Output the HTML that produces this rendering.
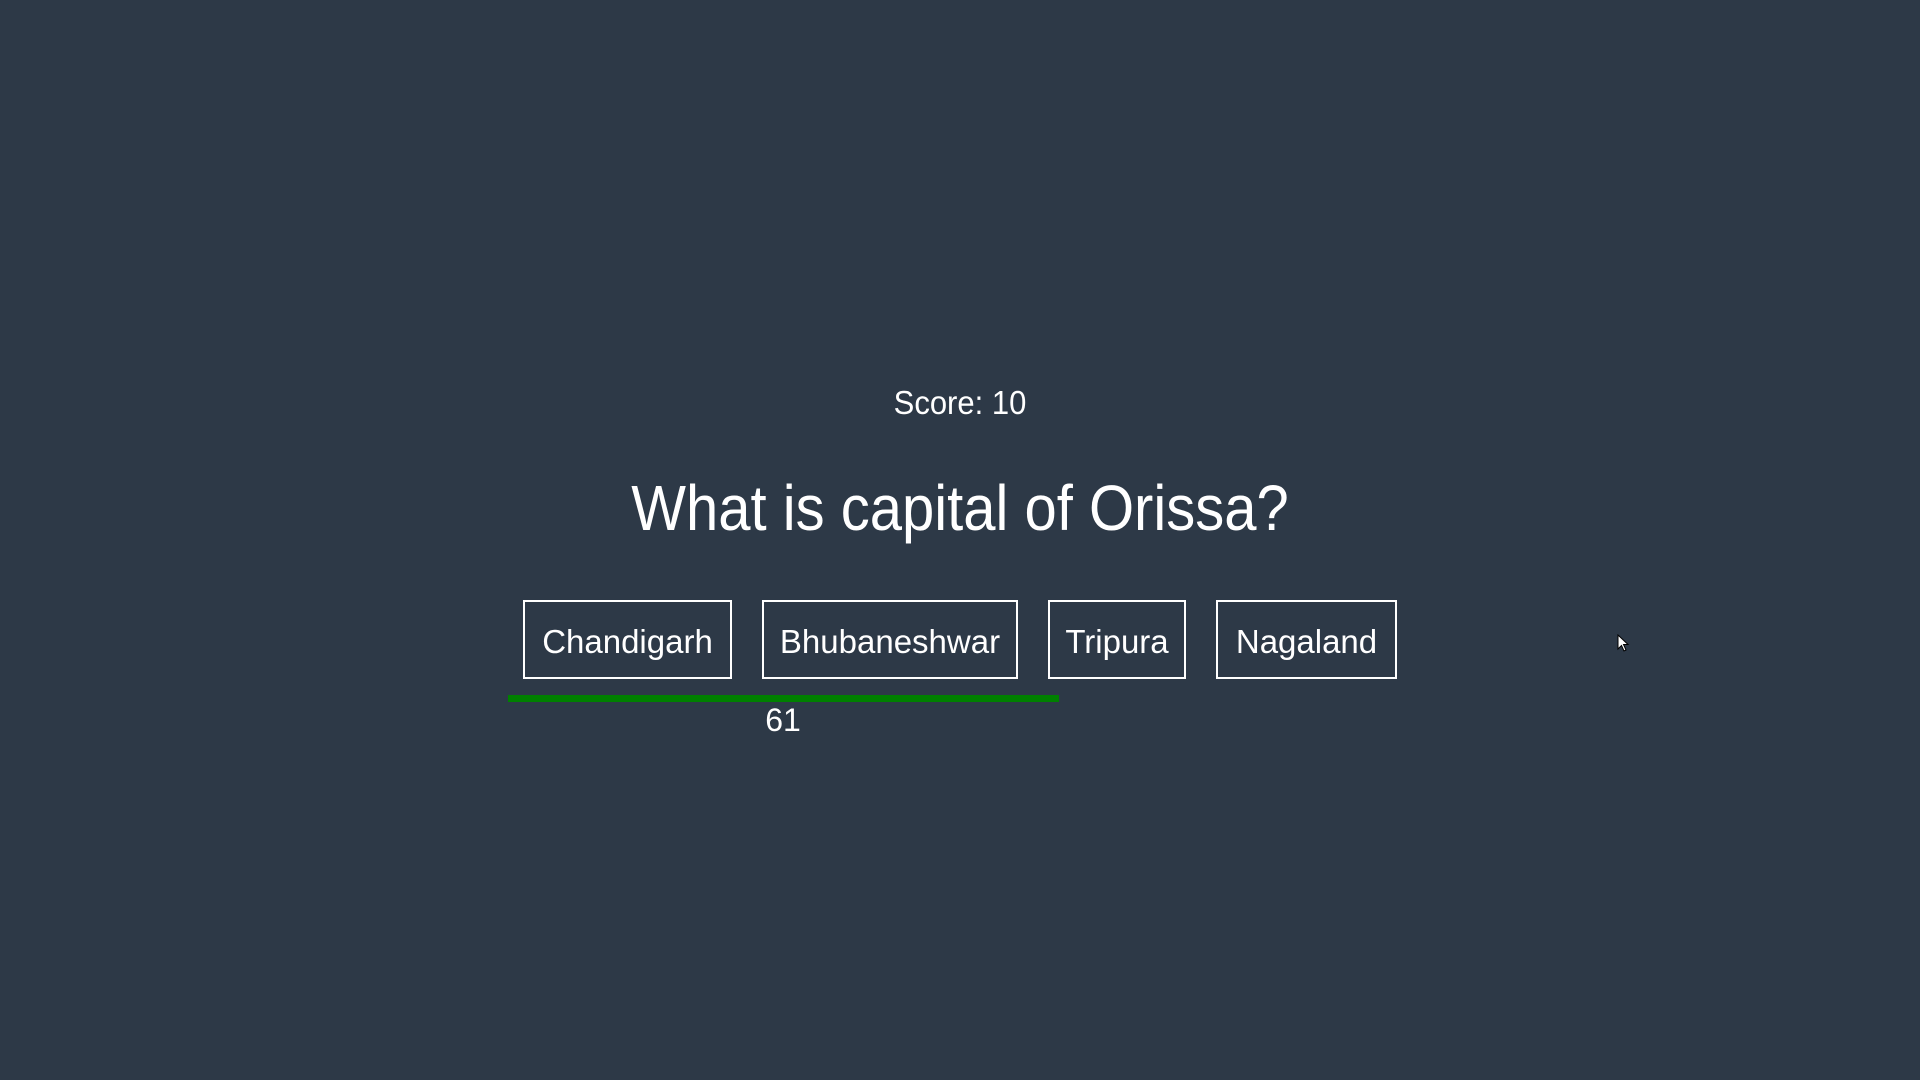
<!DOCTYPE html>
<html><head><meta charset="utf-8"><style>
html,body{margin:0;padding:0;width:1920px;height:1080px;overflow:hidden;background:#2d3947;font-family:"Liberation Sans",Arial,sans-serif;color:#fff}
.a{position:absolute;white-space:nowrap}
.c{text-align:center}
.btn{position:absolute;border:2px solid #fff;box-sizing:border-box;top:600px;height:79px;font-size:33px;line-height:79px;text-align:center}
</style></head><body>
<div class="a c" style="left:760px;width:400px;top:383px;font-size:31px;line-height:40px;transform:scaleY(1.08)">Score: 10</div>
<div class="a c" style="left:460px;width:1000px;top:474px;font-size:58px;line-height:70px;transform:scaleY(1.1)">What is capital of Orissa?</div>
<div class="btn" style="left:523px;width:209px">Chandigarh</div>
<div class="btn" style="left:762px;width:256px">Bhubaneshwar</div>
<div class="btn" style="left:1048px;width:138px">Tripura</div>
<div class="btn" style="left:1216px;width:181px">Nagaland</div>
<div class="a" style="left:508px;top:695px;width:551px;height:7px;background:#008000"></div>
<div class="a c" style="left:733px;width:100px;top:700px;font-size:32px;line-height:40px">61</div>
<svg class="a" style="left:1617px;top:634px" width="14" height="20" viewBox="0 0 14 20"><path d="M1 1 L1 15 L4.5 11.5 L7 17 L9 16 L6.5 10.5 L11 10.5 Z" fill="#fff" stroke="#000" stroke-width="1"/></svg>
</body></html>
